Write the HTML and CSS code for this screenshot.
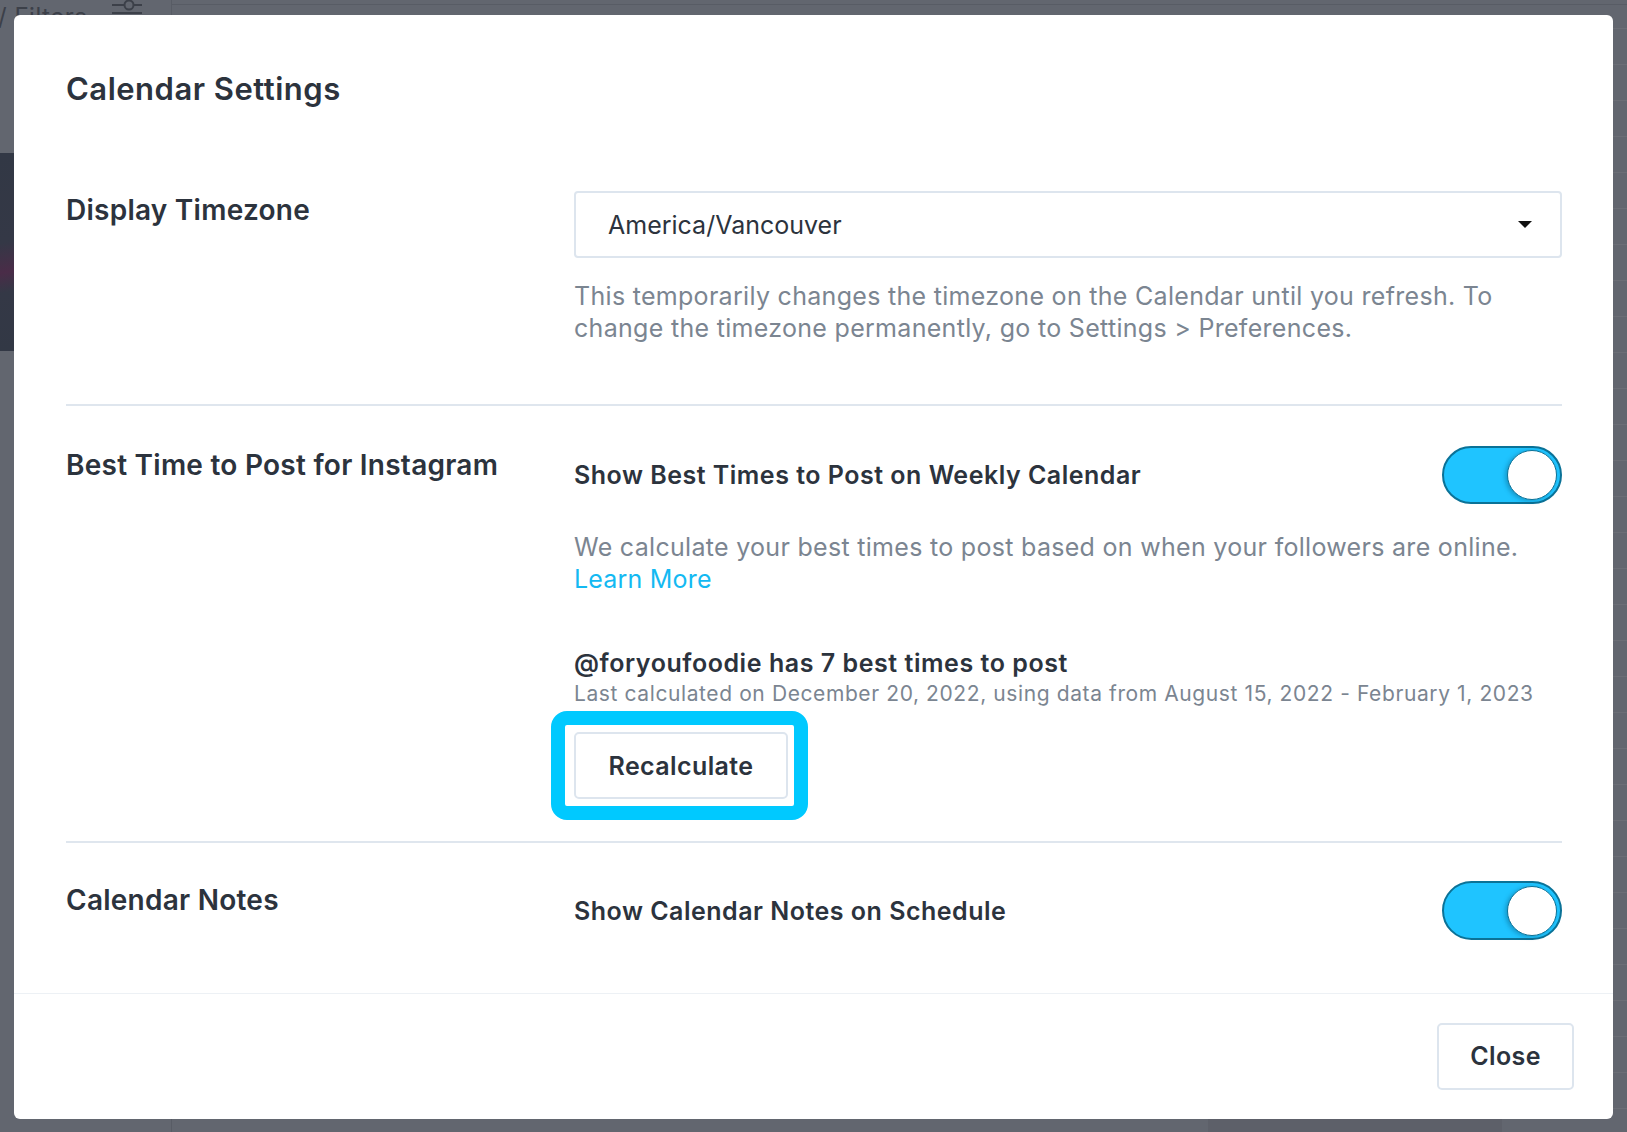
FILE: index.html
```html
<!DOCTYPE html>
<html lang="en">
<head>
<meta charset="utf-8">
<title>Calendar Settings</title>
<link rel="stylesheet" href="styles.css">
</head>
<body>
<div class="app-bg">
  <div class="bg-filters">/ Filters</div>
  <svg class="bg-filter-icon" width="30" height="16" viewBox="0 0 30 16"><line x1="0" y1="6" x2="30" y2="6" stroke="#3c4049" stroke-width="2"/><circle cx="17" cy="6" r="4.5" fill="#62666f" stroke="#3c4049" stroke-width="2"/><line x1="0" y1="14" x2="30" y2="14" stroke="#3c4049" stroke-width="2"/></svg>
  <div class="bg-vline"></div>
  <div class="bg-hline"></div>
  <div class="bg-photo"></div>
  <div class="bg-rows"></div>
  <div class="bg-shade"></div>
</div>
<div class="modal">
  <div class="modal-body">
    <h1 class="modal-title">Calendar Settings</h1>

    <section class="setting setting-tz">
      <h2 class="setting-label">Display Timezone</h2>
      <div class="setting-content">
        <div class="select">
          <span class="select-value">America/Vancouver</span>
          <span class="caret"></span>
        </div>
        <p class="help">This temporarily changes the timezone on the Calendar until you refresh. To change the timezone permanently, go to Settings &gt; Preferences.</p>
      </div>
    </section>

    <section class="setting setting-best">
      <h2 class="setting-label">Best Time to Post for Instagram</h2>
      <div class="setting-content">
        <div class="toggle-row">
          <span class="toggle-text">Show Best Times to Post on Weekly Calendar</span>
          <span class="toggle on"><span class="knob"></span></span>
        </div>
        <p class="help help-desc">We calculate your best times to post based on when your followers are online. <a class="link">Learn More</a></p>
        <p class="account">@foryoufoodie has 7 best times to post</p>
        <p class="calc">Last calculated on December 20, 2022, using data from August 15, 2022 - February 1, 2023</p>
        <span class="highlight"><button class="btn btn-recalc">Recalculate</button></span>
      </div>
    </section>

    <section class="setting setting-notes">
      <h2 class="setting-label">Calendar Notes</h2>
      <div class="setting-content">
        <div class="toggle-row toggle-row-notes">
          <span class="toggle-text">Show Calendar Notes on Schedule</span>
          <span class="toggle on"><span class="knob"></span></span>
        </div>
      </div>
    </section>
  </div>
  <div class="modal-footer">
    <button class="btn btn-close">Close</button>
  </div>
</div>
</body>
</html>
```
FILE: styles.css
```css
* { box-sizing: border-box; }

html, body {
  margin: 0;
  height: 1132px;
  overflow: hidden;
}

body {
  background: #62666f;
  font-family: Inter, "Noto Sans", "Liberation Sans", sans-serif;
  color: #2c333d;
  padding: 15px 14px 13px 14px;
  position: relative;
}

/* ---------- backdrop (dimmed app behind the dialog) ---------- */
.app-bg {
  position: absolute;
  inset: 0;
  z-index: 0;
}
.bg-filters {
  position: absolute;
  left: -2px;
  top: 2px;
  font-size: 24px;
  color: #3c4049;
  letter-spacing: 0.5px;
}
.bg-filter-icon {
  position: absolute;
  left: 112px;
  top: -1px;
}
.bg-vline {
  position: absolute;
  left: 171px;
  top: 0;
  bottom: 0;
  width: 1px;
  background: #585c65;
}
.bg-hline {
  position: absolute;
  left: 171px;
  right: 0;
  top: 4px;
  height: 1px;
  background: #585c65;
}
.bg-photo {
  position: absolute;
  left: 0;
  top: 153px;
  width: 14px;
  height: 198px;
  background: linear-gradient(170deg, #323845 0%, #343846 45%, #4a2c48 60%, #343846 70%, #323845 100%);
}
.bg-rows {
  position: absolute;
  left: 1613px;
  right: 0;
  top: 0;
  bottom: 0;
  background: repeating-linear-gradient(180deg, transparent 0, transparent 28px, #6b6e76 28px, #6b6e76 29px, transparent 29px, transparent 36px);
}
.bg-shade {
  position: absolute;
  left: 1208px;
  width: 294px;
  top: 1119px;
  bottom: 0;
  background: #5d6069;
}

/* ---------- modal ---------- */
.modal {
  position: relative;
  z-index: 1;
  height: 1104px;
  background: #ffffff;
  border-radius: 6px;
  display: flex;
  flex-direction: column;
}

.modal-body {
  flex: 1;
  padding: 56px 51px 0 52px;
}

.modal-title {
  margin: 0 0 84px;
  font-size: 31px;
  line-height: 36px;
  font-weight: 600;
  letter-spacing: 0.5px;
}

.setting {
  display: grid;
  grid-template-columns: 508px 1fr;
}

.setting-tz {
  padding-bottom: 60px;
  border-bottom: 2px solid #dfe6ee;
}
.setting-best {
  padding-top: 40px;
  padding-bottom: 42px;
  border-bottom: 2px solid #dfe6ee;
}
.setting-notes {
  padding-top: 38px;
}

.setting-label {
  margin: 0;
  font-size: 28px;
  line-height: 38px;
  font-weight: 600;
  letter-spacing: 0.25px;
}

.setting-content {
  display: flex;
  flex-direction: column;
  align-items: flex-start;
}

/* select */
.select {
  align-self: stretch;
  height: 67px;
  border: 2px solid #dde5ee;
  border-radius: 4px;
  display: flex;
  align-items: center;
  justify-content: space-between;
  padding: 0 28px 0 32px;
}
.select-value {
  font-size: 25px;
  color: #2c333d;
}
.caret {
  width: 0;
  height: 0;
  border-left: 7px solid transparent;
  border-right: 7px solid transparent;
  border-top: 7px solid #111;
}

.help {
  margin: 22px 0 0;
  font-size: 25px;
  line-height: 32px;
  letter-spacing: 0.3px;
  color: #7b8591;
}
.help-desc {
  margin-top: 27px;
}
.link {
  display: block;
  color: #14b9f2;
  letter-spacing: 0.2px;
}

/* toggle rows */
.toggle-row {
  align-self: stretch;
  height: 58px;
  display: flex;
  align-items: center;
  justify-content: space-between;
}
.toggle-row-notes {
  height: 59px;
}
.toggle-text {
  font-size: 25px;
  font-weight: 600;
  letter-spacing: 0.5px;
  color: #2c333d;
}
.toggle {
  width: 120px;
  height: 100%;
  border-radius: 30px;
  background: #1fc4ff;
  border: 2px solid #0b7297;
  display: flex;
  align-items: center;
  justify-content: flex-end;
  padding-right: 3px;
}
.knob {
  width: 50px;
  height: 50px;
  border-radius: 50%;
  background: #ffffff;
  border: 1.5px solid #0b7297;
  box-shadow: -2px 1px 4px rgba(5, 70, 100, 0.35);
}

.account {
  margin: 52px 0 0;
  font-size: 25px;
  line-height: 32px;
  font-weight: 600;
  letter-spacing: 0.55px;
}
.calc {
  margin: 1px 0 0;
  font-size: 21px;
  line-height: 28px;
  letter-spacing: 0.6px;
  color: #7b8591;
}

/* buttons */
.btn {
  font-family: inherit;
  background: #ffffff;
  border: 2px solid #dde5ee;
  border-radius: 5px;
  font-weight: 600;
  color: #2c333d;
  cursor: pointer;
}
.btn-recalc {
  display: block;
  width: 214px;
  height: 67px;
  font-size: 25px;
  letter-spacing: 0.4px;
}
.highlight {
  position: relative;
  margin-top: 24px;
  display: inline-block;
}
.highlight::before {
  content: "";
  position: absolute;
  top: -21px;
  left: -23px;
  right: -20px;
  bottom: -21px;
  border: 14px solid #00c9ff;
  border-radius: 16px;
  pointer-events: none;
}

.modal-footer {
  border-top: 1px solid #edf1f5;
  height: 126px;
  display: flex;
  align-items: center;
  justify-content: flex-end;
  padding: 0 39px 1px 0;
}
.btn-close {
  width: 137px;
  height: 67px;
  font-size: 25px;
  letter-spacing: 0.4px;
}
```
